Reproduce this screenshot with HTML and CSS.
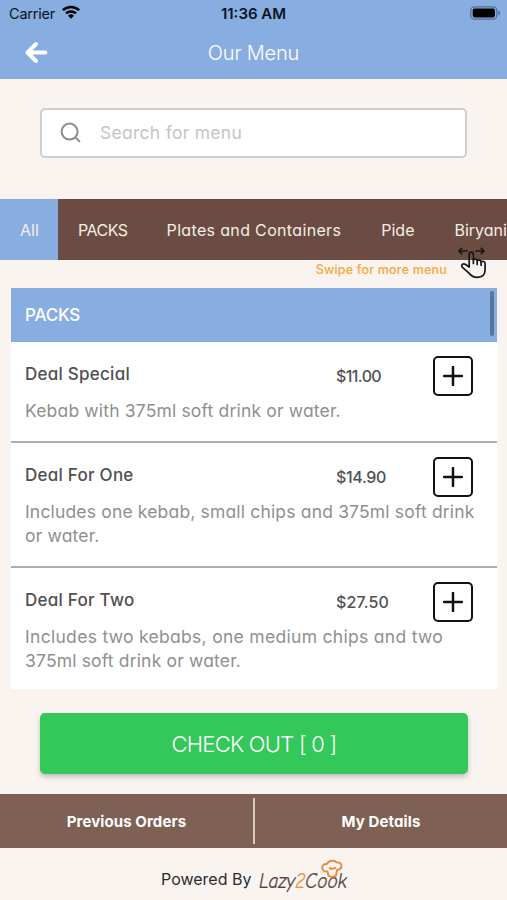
FILE: index.html
```
<!DOCTYPE html>
<html lang="en">
<head>
<meta charset="utf-8">
<meta name="viewport" content="width=device-width, initial-scale=1">
<title>Our Menu</title>
<link rel="stylesheet" href="styles.css">
</head>
<body>
<div class="app">
  <header class="header">
    <div class="status">
      <div class="carrier">
        <span>Carrier</span>
        <svg class="wifi" viewBox="0 0 18 14" fill="none" stroke="#000" stroke-width="2.5">
          <path d="M.9 5.2a11.6 11.6 0 0 1 16.2 0"/>
          <path d="M4 8.4a7.2 7.2 0 0 1 10 0"/>
          <path d="M9 13.8 6.1 10.8a4.1 4.1 0 0 1 5.8 0z" fill="#000" stroke="none"/>
        </svg>
      </div>
      <time class="time">11:36 AM</time>
      <svg class="battery" viewBox="0 0 31 14">
        <rect x=".8" y=".8" width="26" height="12.4" rx="3.6" fill="none" stroke="#527294" stroke-width="1.3"/>
        <rect x="2.7" y="2.6" width="22.2" height="8.8" rx="1.8"/>
        <path d="M28.3 4.6c1.2.5 1.9 1.3 1.9 2.4s-.7 1.9-1.9 2.4z" fill="#527294"/>
      </svg>
    </div>
    <div class="titlebar">
      <svg class="back" viewBox="0 0 24 24" fill="none" stroke="#fff" stroke-width="4" stroke-linecap="round" stroke-linejoin="round">
        <path d="M12 3 3.500 11.500l8.500 8.500M3.800 11.500H21.4"/>
      </svg>
      <h1 class="title">Our Menu</h1>
    </div>
  </header>

  <label class="search">
    <svg class="search-icon" viewBox="0 0 22 22" fill="none" stroke="#8c8c8c" stroke-width="2" stroke-linecap="round">
      <circle cx="9.6" cy="9.6" r="8"/><path d="m15.4 15.4 4 4"/>
    </svg>
    <span>Search for menu</span>
  </label>

  <nav class="tabs">
    <a class="tab active">All</a>
    <a class="tab caps">PACKS</a>
    <a class="tab wide">Plates and Containers</a>
    <a class="tab">Pide</a>
    <a class="tab">Biryani</a>
  </nav>

  <div class="hint">
    <span>Swipe for more menu</span>
    <svg class="swipe" viewBox="0 0 30 32" fill="none" stroke="#161616" stroke-width="1.7" stroke-linecap="round" stroke-linejoin="round">
      <path d="M9 4H1M3.600 1.400 1 4l2.600 2.600M18 4h8M23.400 1.400 26 4l-2.600 2.600"/>
      <path d="M11.200 20V7.200a2.100 2.100 0 0 1 4.200 0v5.700c.8-1.300 3.500-1.100 3.800.8.9-1.100 3.500-.8 3.900 1.100 1.100-.8 4-.5 4 2v6c0 4.600-2.800 7.500-7.800 7.500-4 0-6-1.300-8.300-4.200L4.200 20.100c-1.300-2.100.9-4 3-2.800z"/>
      <path d="M15.400 12.500v4M19.200 14v3.500M23.100 15v3.300"/>
    </svg>
  </div>

  <main class="menu">
    <h2 class="section">PACKS</h2>
    <i class="thumb"></i>
    <article class="item">
      <div class="row">
        <h3 class="name">Deal Special</h3><span class="price p1">$11.00</span>
        <button class="add" aria-label="Add"><svg viewBox="0 0 20 20"><path d="M10 1v18M1 10h18"/></svg></button>
      </div>
      <p class="desc">Kebab with 375ml soft drink or water.</p>
    </article>
    <article class="item">
      <div class="row">
        <h3 class="name">Deal For One</h3><span class="price p2">$14.90</span>
        <button class="add" aria-label="Add"><svg viewBox="0 0 20 20"><path d="M10 1v18M1 10h18"/></svg></button>
      </div>
      <p class="desc">Includes one kebab, small chips and 375ml soft drink<br>or water.</p>
    </article>
    <article class="item">
      <div class="row">
        <h3 class="name">Deal For Two</h3><span class="price">$27.50</span>
        <button class="add" aria-label="Add"><svg viewBox="0 0 20 20"><path d="M10 1v18M1 10h18"/></svg></button>
      </div>
      <p class="desc"><span class="loose">Includes two kebabs, one medium chips and two</span><br>375ml soft drink or water.</p>
    </article>
  </main>

  <button class="checkout">CHECK OUT [ 0 ]</button>

  <nav class="links">
    <a class="link">Previous Orders</a>
    <a class="link">My Details</a>
  </nav>

  <footer class="powered">
    <span>Powered By</span>
    <svg class="logo" viewBox="0 0 100 42">
      <text class="script" x="2" y="31" textLength="88" lengthAdjust="spacingAndGlyphs">Lazy<tspan class="two">2</tspan>Cook</text>
      <path d="M70.500 14.500c-7 .5-7-8-.5-7.500C71.500 3 78 3 79.500 5.500c6-1 7 6.500.5 7.500l-1 5.500c-2 1.800-5.500 1.800-7.500.2zM72 11c2.500 1 5 .8 7-.3" fill="none" stroke="#ea8a3e" stroke-width="1.900" stroke-linejoin="round"/>
    </svg>
  </footer>
</div>
</body>
</html>
```
FILE: styles.css
```
* { box-sizing: border-box; }
body {
  margin: 0;
  font-family: Inter, sans-serif;
  font-feature-settings: "cv11";
  background: #f9f4f0;
}
h1, h2, h3, p { margin: 0; font-weight: inherit; }
button { font: inherit; font-feature-settings: inherit; padding: 0; }
svg { display: block; flex: none; }

.app { display: flex; flex-direction: column; height: 900px; overflow: hidden; }

.header { height: 79px; flex: none; background: #87ade1; }
.status {
  display: grid;
  grid-template-columns: 1fr auto 1fr;
  align-items: center;
  height: 27px;
  padding: 0 6px 0 9px;
  color: #0c1420;
}
.carrier { display: flex; align-items: center; gap: 7px; font-size: 14.500px; letter-spacing: -.2px; font-feature-settings: normal; }
.wifi { width: 18px; height: 14px; margin-top: -3px; }
.time { font-size: 15px; font-weight: 600; margin-left: -3px; }
.battery { width: 31px; height: 14px; margin-top: -1px; justify-self: end; }
.titlebar {
  display: grid;
  grid-template-columns: 1fr auto 1fr;
  align-items: center;
  height: 52px;
  padding: 0 24px;
}
.back { width: 24px; height: 24px; }
.title { font-size: 20px; font-weight: 350; letter-spacing: -.2px; color: #fff; font-feature-settings: normal; }

.search {
  display: flex;
  align-items: center;
  gap: 18px;
  flex: none;
  height: 50px;
  margin: 29px 40px 0;
  padding: 0 0 1px 18px;
  border: 2px solid #d0cecc;
  border-radius: 5px;
  background: #fff;
  color: #c4c4c4;
  font-size: 17.500px;
  letter-spacing: .28px;
}
.search-icon { width: 22px; height: 22px; }

.tabs {
  display: flex;
  flex: none;
  height: 61px;
  margin-top: 41px;
  overflow: hidden;
  background: #6a4c42;
}
.tab {
  display: flex;
  align-items: center;
  flex: none;
  padding: 0 20px;
  font-size: 16px;
  color: #f6ece6;
}
.tab.active { background: #87ade1; width: 58px; }
.caps { letter-spacing: -.5px; padding-right: 19px; }
.wide { letter-spacing: .34px; }

.hint {
  display: flex;
  justify-content: flex-end;
  flex: none;
  height: 28px;
  padding-right: 19px;
  gap: 11px;
  color: #fba538;
  font-size: 12.500px;
  font-weight: 500;
  line-height: 20px;
  letter-spacing: .2px;
}
.swipe { width: 30px; height: 32px; margin-top: -13px; }

.menu {
  position: relative;
  flex: none;
  height: 401px;
  margin: 0 10px 0 11px;
  background: #fff;
}
.section {
  height: 54px;
  padding-left: 14px;
  line-height: 54px;
  font-size: 17px;
  font-weight: 500;
  letter-spacing: -.2px;
  color: #fff;
  background: #87ade1;
}
.thumb {
  position: absolute;
  top: 3px;
  right: 3px;
  width: 4px;
  height: 45px;
  border-radius: 2px;
  background: #56759f;
}
.item { padding: 14px 14px 18px; border-bottom: 2px solid #b0afb0; }
.item:last-child { border: 0; }
.row { display: grid; grid-template-columns: 311px 97px 40px; height: 43px; }
.name { line-height: 36px; font-size: 17px; font-weight: 500; letter-spacing: .25px; color: #505050; }
.price { line-height: 41px; font-size: 16px; font-weight: 500; letter-spacing: .1px; color: #505050; }
.p1 { letter-spacing: -.6px; }
.p2 { letter-spacing: -.35px; }
.add {
  display: grid;
  place-items: center;
  width: 40px;
  height: 40px;
  border: 2.500px solid #111;
  border-radius: 5px;
  background: none;
}
.add svg { width: 20px; height: 20px; stroke: #111; stroke-width: 2.500; stroke-linecap: round; }
.desc { line-height: 24px; font-size: 17.500px; letter-spacing: .17px; color: #8f8f8f; white-space: nowrap; }
.loose { letter-spacing: .3px; }

.checkout {
  flex: none;
  height: 61px;
  margin: 24px 39px 0 40px;
  border: 0;
  border-radius: 5px;
  background: #34c759;
  box-shadow: 0 3px 5px rgba(0, 0, 0, .22);
  color: #fff;
  font-size: 22px;
  font-weight: 300;
  letter-spacing: -.75px;
}

.links {
  display: grid;
  grid-template-columns: 253px 1fr;
  flex: none;
  height: 54px;
  margin-top: 20px;
  padding: 4px 0;
  background: #7f6055;
}
.link {
  display: flex;
  align-items: center;
  justify-content: center;
  font-size: 15px;
  font-weight: 700;
  letter-spacing: .1px;
  color: #fff;
}
.link + .link { border-left: 2px solid #d9c8bb; }

.powered {
  display: flex;
  align-items: center;
  gap: 6px;
  height: 52px;
  padding: 9px 0 0 161px;
  font-size: 16px;
  color: #2c2c2c;
}
.logo { width: 100px; height: 42px; margin-top: -2px; }
.script {
  font: italic 400 23px "Comic Neue", "Segoe Script", cursive;
  fill: #54423f;
  stroke: #54423f;
  stroke-width: .2px;
}
.two { fill: #ef9145; stroke: #ef9145; }
```
